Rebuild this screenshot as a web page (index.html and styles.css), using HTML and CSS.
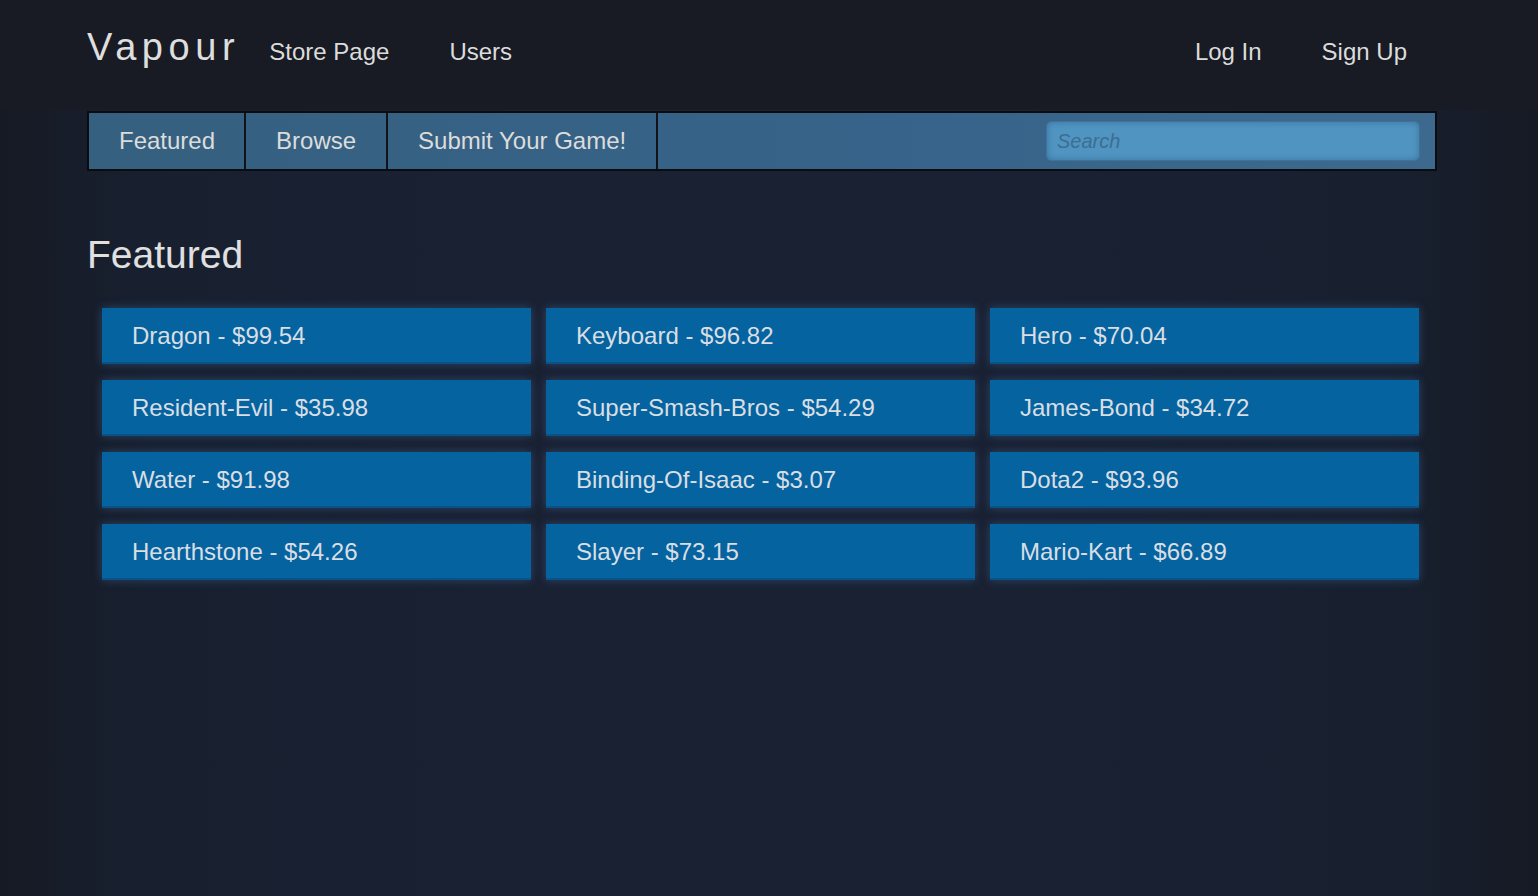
FILE: index.html
```html
<!DOCTYPE html>
<html lang="en">
<head>
<meta charset="utf-8">
<title>Vapour</title>
<link rel="stylesheet" href="styles.css">
</head>
<body>
<header class="topbar">
  <div class="topbar-inner">
    <a class="brand" href="#">Vapour</a>
    <nav class="main-links">
      <a href="#">Store Page</a>
      <a href="#">Users</a>
    </nav>
    <nav class="user-links">
      <a href="#">Log In</a>
      <a href="#">Sign Up</a>
    </nav>
  </div>
</header>
<main class="container">
  <div class="storebar">
    <a class="tab" href="#">Featured</a>
    <a class="tab" href="#">Browse</a>
    <a class="tab" href="#">Submit Your Game!</a>
    <div class="spacer"></div>
    <input class="search" type="text" placeholder="Search">
  </div>
  <h1 class="section-title">Featured</h1>
  <div class="games">
    <a class="game" href="#">Dragon - $99.54</a>
    <a class="game" href="#">Keyboard - $96.82</a>
    <a class="game" href="#">Hero - $70.04</a>
    <a class="game" href="#">Resident-Evil - $35.98</a>
    <a class="game" href="#">Super-Smash-Bros - $54.29</a>
    <a class="game" href="#">James-Bond - $34.72</a>
    <a class="game" href="#">Water - $91.98</a>
    <a class="game" href="#">Binding-Of-Isaac - $3.07</a>
    <a class="game" href="#">Dota2 - $93.96</a>
    <a class="game" href="#">Hearthstone - $54.26</a>
    <a class="game" href="#">Slayer - $73.15</a>
    <a class="game" href="#">Mario-Kart - $66.89</a>
  </div>
</main>
</body>
</html>
```
FILE: styles.css
```css
* { box-sizing: border-box; }
html, body { margin: 0; padding: 0; }
body {
  min-height: 896px;
  font-family: "Liberation Sans", Arial, sans-serif;
  color: #dcdcdc;
  background: linear-gradient(to right, #161a24 0%, #182030 10%, #1a2133 35%, #1a2133 65%, #182030 90%, #161a24 100%);
}
a { text-decoration: none; color: inherit; }

.topbar {
  height: 110px;
  background: #181b23;
}
.topbar-inner {
  width: 1350px;
  margin-left: 87px;
  display: flex;
  align-items: flex-start;
  height: 110px;
}
.brand {
  font-size: 38px;
  line-height: 94px;
  letter-spacing: 5.6px;
  color: #dedede;
  font-weight: 400;
}
.main-links, .user-links { display: flex; }
.user-links { margin-left: auto; }
.main-links a, .user-links a {
  font-size: 24px;
  line-height: 104px;
  padding: 0 30px;
  color: #dcdcdc;
}
.main-links a:first-child { padding-left: 29px; }

.container {
  width: 1350px;
  margin-left: 87px;
  padding-top: 1px;
}
.storebar {
  display: flex;
  align-items: center;
  height: 60px;
  border: 2px solid #0b0c0f;
  background: linear-gradient(to right, #35607f 0%, #37638a 60%, #3c698d 100%);
}
.tab {
  font-size: 24px;
  line-height: 56px;
  padding: 0 30px 0 30px;
  border-right: 2px solid #101319;
  color: #dcdcdc;
}
.tab:first-child { padding-right: 29px; }
.spacer { flex: 1; }
.search {
  width: 374px;
  height: 40px;
  margin-right: 15px;
  border-radius: 6px;
  border: 1px solid #3f7299;
  background: #5095c2;
  box-shadow: inset 0 0 6px rgba(30, 70, 110, 0.45);
  padding: 0 10px;
  font-family: "Liberation Sans", Arial, sans-serif;
  font-size: 20px;
  font-style: italic;
  color: #2f5a7c;
  outline: none;
}
.search::placeholder { color: #3d6d91; opacity: 1; }

.section-title {
  margin: 60px 0 30px 0;
  font-size: 39px;
  line-height: 47px;
  font-weight: 400;
  color: #e0e0e0;
}
.games {
  display: grid;
  grid-template-columns: repeat(3, 429px);
  column-gap: 15px;
  row-gap: 16px;
  padding-left: 15px;
}
.game {
  height: 56px;
  line-height: 56px;
  padding-left: 30px;
  font-size: 24px;
  color: #d9dee4;
  background: #0563a0;
  border-bottom: 2px solid #0a5187;
  box-shadow: 0 0 9px rgba(70, 130, 190, 0.4);
}
```
